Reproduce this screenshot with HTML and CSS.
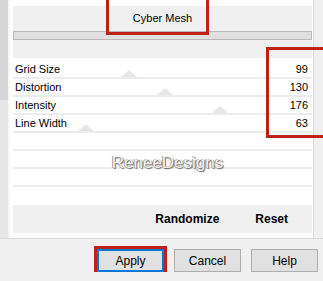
FILE: index.html
```html
<!DOCTYPE html>
<html lang="en">
<head>
    <meta charset="UTF-8">
    <meta name="viewport" content="width=device-width, initial-scale=1.0">
    <title>Cyber Mesh</title>
    <link rel="stylesheet" href="styles.css">
</head>
<body>
    <div class="frame">
      <div class="scrollbar"><div class="thumb"></div></div>
      <div class="panel">
        <div class="header">
          <div class="title">Cyber Mesh</div>
          <div class="progress"></div>
        </div>

        <div class="list">
          <div class="row">
            <span class="label">Grid Size</span>
            <span class="thumb-mark" style="left: 108px"></span>
            <span class="value">99</span>
          </div>
          <div class="row">
            <span class="label">Distortion</span>
            <span class="thumb-mark" style="left: 144px"></span>
            <span class="value">130</span>
          </div>
          <div class="row">
            <span class="label">Intensity</span>
            <span class="thumb-mark" style="left: 199px"></span>
            <span class="value">176</span>
          </div>
          <div class="row">
            <span class="label">Line Width</span>
            <span class="thumb-mark" style="left: 65px"></span>
            <span class="value">63</span>
          </div>
          <div class="row"></div>
          <div class="row"></div>
          <div class="row"></div>
          <div class="watermark">ReneeDesigns</div>
        </div>

        <div class="actions">
          <span>Randomize</span>
          <span>Reset</span>
        </div>
      </div>
      <div class="mark mark-title"></div>
      <div class="mark mark-values"></div>
    </div>

    <div class="buttons">
      <button class="btn btn-default marked">Apply</button>
      <button class="btn">Cancel</button>
      <button class="btn">Help</button>
    </div>
</body>
</html>
```

FILE: styles.css
```css
body {
  margin: 0;
  background-color: #f0f0f0;
  font-family: "Liberation Sans", Arial, sans-serif;
  font-size: 11px;
  color: #000;
  overflow: hidden;
}

.frame {
  position: relative;
  display: flex;
  height: 238px;
  border-bottom: 1px solid #dadada;
  overflow: hidden;
}

.scrollbar {
  width: 8px;
  background-color: #e6e6e6;
  border-right: 2px solid #f7f7f7;
}

.scrollbar .thumb {
  height: 100px;
  background-color: #d6d6d6;
}

.panel {
  width: 304px;
  box-sizing: border-box;
  padding: 6px 1px 5px 3px;
  background-color: #fff;
  border-right: 1px solid #d9d9d9;
  display: flex;
  flex-direction: column;
}

.header {
  height: 52px;
  background-color: #f0f0f0;
}

.title {
  height: 24px;
  line-height: 24px;
  text-align: center;
}

.progress {
  margin-top: 1px;
  height: 9px;
  box-sizing: border-box;
  border: 1px solid #b9b9b9;
  background-color: #e0e0e0;
}

.list {
  position: relative;
  padding-top: 3px;
  flex: 1;
}

.row {
  position: relative;
  display: flex;
  justify-content: space-between;
  align-items: center;
  height: 16px;
  padding: 0 4px 0 2px;
  border-bottom: 2px solid #ececec;
}

.thumb-mark {
  position: absolute;
  bottom: 0;
  width: 0;
  height: 0;
  border-left: 8px solid transparent;
  border-right: 8px solid transparent;
  border-bottom: 7px solid #e6e6e6;
}

.watermark {
  position: absolute;
  left: 0;
  right: 0;
  top: 95px;
  text-align: center;
  font-size: 17px;
  color: #f2f2f2;
  text-shadow: 1px 1px 1px #5e5e5e, -1px 0 0 #a0a0a0;
  padding-left: 10px;
}

.actions {
  height: 28px;
  display: flex;
  justify-content: flex-end;
  align-items: center;
  gap: 36px;
  padding-right: 24px;
  background-color: #f0f0f0;
  font-size: 12px;
  font-weight: bold;
}

.mark {
  position: absolute;
  border: 3px solid #c0201a;
}

.mark-title {
  left: 106px;
  top: -6px;
  width: 97px;
  height: 35px;
}

.mark-values {
  left: 266px;
  top: 47px;
  width: 70px;
  height: 85px;
}

.buttons {
  display: flex;
  justify-content: flex-end;
  gap: 10px;
  padding: 10px 5px 0 0;
}

.btn {
  width: 67px;
  height: 23px;
  padding: 0;
  background-color: #e1e1e1;
  border: 1px solid #adadad;
  font-family: "Liberation Sans", Arial, sans-serif;
  font-size: 12px;
  color: #000;
}

.btn-default {
  border: 2px solid #0078d7;
}

.marked {
  position: relative;
}

.marked::after {
  content: "";
  position: absolute;
  inset: -5px;
  border: 3px solid #c0201a;
}
```
